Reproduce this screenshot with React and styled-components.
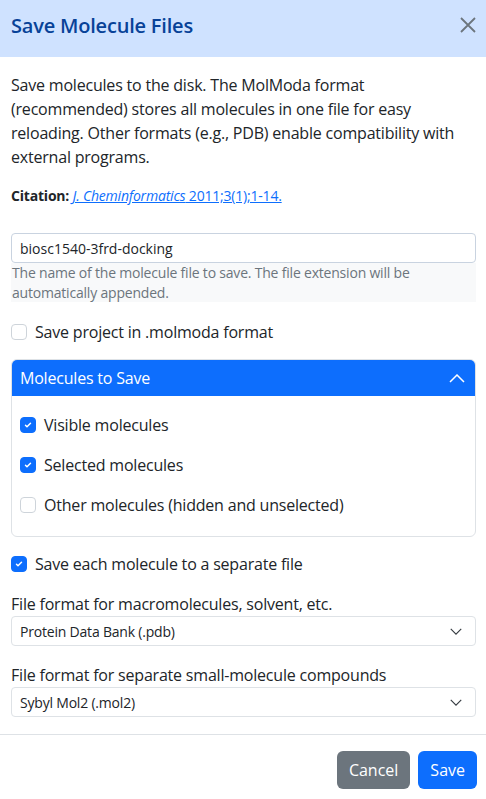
import React, { useState } from "react";
import styled, { createGlobalStyle } from "styled-components";

const GlobalStyle = createGlobalStyle`
  html, body {
    margin: 0;
    padding: 0;
    background: #fff;
  }
  body {
    font-family: "Open Sans", "Noto Sans", sans-serif;
    color: #212529;
    letter-spacing: -0.2px;
  }
  * { box-sizing: border-box; }
`;

const Modal = styled.div`
  width: 486px;
  min-height: 799px;
  background: #fff;
`;

const Header = styled.div`
  height: 57px;
  background: #cfe2ff;
  display: flex;
  align-items: center;
  justify-content: space-between;
  padding: 0 10px 7px 11px;
`;

const Title = styled.h5`
  margin: 0;
  font-size: 20px;
  font-weight: 600;
  color: #084298;
`;

const CloseButton = styled.button`
  border: 0;
  background: none;
  padding: 0;
  width: 16px;
  height: 16px;
  display: flex;
  color: #6c757d;
  cursor: pointer;
`;

const Body = styled.div`
  padding: 16px 10px 17px 11px;
`;

const Intro = styled.p`
  margin: 0 0 16px;
  font-size: 16px;
  line-height: 24px;
`;

const Citation = styled.p`
  margin: 5px 0 27px;
  font-size: 14px;
  line-height: 21px;
  & b { font-weight: 700; }
  & a {
    color: #0d6efd;
    text-decoration: underline;
  }
`;

const TextInput = styled.input`
  display: block;
  width: 100%;
  height: 30px;
  padding: 0 8px;
  font: inherit;
  font-size: 14px;
  color: #212529;
  border: 1px solid #c9d3e0;
  border-radius: 4px;
  outline: none;
`;

const HelpText = styled.div`
  background: #f8f9fa;
  color: #6c757d;
  font-size: 14px;
  line-height: 19.5px;
  padding: 0 1px;
  margin-bottom: 18px;
`;

const CheckRow = styled.label`
  display: flex;
  align-items: center;
  gap: 8px;
  height: 24px;
  font-size: 16px;
  cursor: pointer;
  margin-bottom: ${p => p.$mb || 0}px;
`;

const Box = styled.span`
  width: 16px;
  height: 16px;
  flex: none;
  border-radius: 4px;
  display: flex;
  align-items: center;
  justify-content: center;
  background: ${p => (p.$on ? "#0d6efd" : "#fff")};
  border: 1px solid ${p => (p.$on ? "#0d6efd" : "#ced4da")};
`;

const Card = styled.div`
  border: 1px solid #dee2e6;
  border-radius: 6px;
  overflow: hidden;
  margin-bottom: 15px;
`;

const CardHeader = styled.div`
  height: 36px;
  background: #0d6efd;
  color: #fff;
  display: flex;
  align-items: center;
  justify-content: space-between;
  padding: 0 10px 0 8px;
  font-size: 16px;
`;

const CardBody = styled.div`
  padding: 17px 8px 19px;
  display: flex;
  flex-direction: column;
  gap: 16px;
`;

const FieldLabel = styled.div`
  font-size: 16px;
  line-height: 24px;
  margin-top: ${p => p.$mt || 0}px;
`;

const SelectBox = styled.div`
  height: 30px;
  border: 1px solid #dee2e6;
  border-radius: 4px;
  display: flex;
  align-items: center;
  justify-content: space-between;
  padding: 0 13px 0 8px;
  font-size: 14px;
`;

const Footer = styled.div`
  border-top: 1px solid #dee2e6;
  display: flex;
  justify-content: flex-end;
  gap: 8px;
  padding: 16px 9px;
`;

const Button = styled.button`
  border: 0;
  border-radius: 6px;
  height: 38px;
  padding: 0 12px;
  font: inherit;
  font-size: 16px;
  color: #fff;
  background: ${p => (p.$variant === "primary" ? "#0d6efd" : "#6c757d")};
  cursor: pointer;
`;

function Checkbox({ checked, onChange, children, mb }) {
  return (
    <CheckRow $mb={mb} onClick={onChange}>
      <Box $on={checked}>
        {checked && (
          <svg width="10" height="10" viewBox="0 0 20 20">
            <path d="M5 10.5l3 3 7-7" fill="none" stroke="#fff" strokeWidth="3" strokeLinecap="round" strokeLinejoin="round" />
          </svg>
        )}
      </Box>
      {children}
    </CheckRow>
  );
}

function Chevron({ up, color, size }) {
  return (
    <svg width={size} height={size / 2 + 1} viewBox="0 0 16 9">
      <path d={up ? "M1 8l7-7 7 7" : "M1 1l7 7 7-7"} fill="none" stroke={color} strokeWidth="1.5" />
    </svg>
  );
}

export default function App() {
  const [name, setName] = useState("biosc1540-3frd-docking");
  const [project, setProject] = useState(false);
  const [visible, setVisible] = useState(true);
  const [selected, setSelected] = useState(true);
  const [other, setOther] = useState(false);
  const [separate, setSeparate] = useState(true);

  return (
    <Modal>
      <GlobalStyle />
      <Header>
        <Title>Save Molecule Files</Title>
        <CloseButton aria-label="Close">
          <svg width="16" height="16" viewBox="0 0 16 16">
            <path d="M1 1l14 14M15 1L1 15" stroke="currentColor" strokeWidth="1.8" />
          </svg>
        </CloseButton>
      </Header>
      <Body>
        <Intro>
          Save molecules to the disk. The MolModa format (recommended) stores all
          molecules in one file for easy reloading. Other formats (e.g., PDB)
          enable compatibility with external programs.
        </Intro>
        <Citation>
          <b>Citation:</b> <a href="#"><i>J. Cheminformatics</i> 2011;3(1);1-14.</a>
        </Citation>
        <TextInput value={name} onChange={e => setName(e.target.value)} />
        <HelpText>
          The name of the molecule file to save. The file extension will be
          automatically appended.
        </HelpText>
        <Checkbox checked={project} onChange={() => setProject(!project)} mb={15}>
          Save project in .molmoda format
        </Checkbox>
        <Card>
          <CardHeader>
            Molecules to Save
            <Chevron up color="#fff" size={16} />
          </CardHeader>
          <CardBody>
            <Checkbox checked={visible} onChange={() => setVisible(!visible)}>
              Visible molecules
            </Checkbox>
            <Checkbox checked={selected} onChange={() => setSelected(!selected)}>
              Selected molecules
            </Checkbox>
            <Checkbox checked={other} onChange={() => setOther(!other)}>
              Other molecules (hidden and unselected)
            </Checkbox>
          </CardBody>
        </Card>
        <Checkbox checked={separate} onChange={() => setSeparate(!separate)}>
          Save each molecule to a separate file
        </Checkbox>
        <FieldLabel $mt={16}>File format for macromolecules, solvent, etc.</FieldLabel>
        <SelectBox>
          Protein Data Bank (.pdb)
          <Chevron color="#343a40" size={12} />
        </SelectBox>
        <FieldLabel $mt={17}>File format for separate small-molecule compounds</FieldLabel>
        <SelectBox>
          Sybyl Mol2 (.mol2)
          <Chevron color="#343a40" size={12} />
        </SelectBox>
      </Body>
      <Footer>
        <Button>Cancel</Button>
        <Button $variant="primary">Save</Button>
      </Footer>
    </Modal>
  );
}
